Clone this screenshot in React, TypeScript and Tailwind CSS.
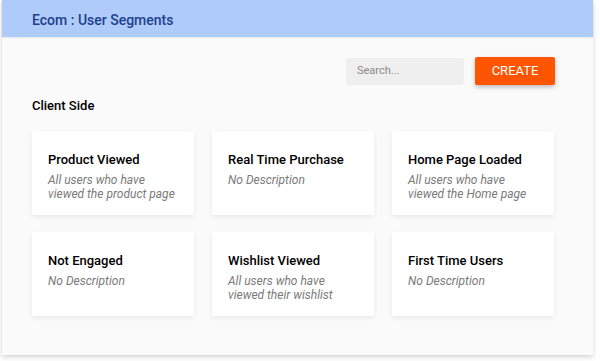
const segments = [
  { title: "Product Viewed", desc: "All users who have viewed the product page" },
  { title: "Real Time Purchase", desc: "No Description" },
  { title: "Home Page Loaded", desc: "All users who have viewed the Home page" },
  { title: "Not Engaged", desc: "No Description" },
  { title: "Wishlist Viewed", desc: "All users who have viewed their wishlist" },
  { title: "First Time Users", desc: "No Description" },
];

export default function App() {
  return (
    <div className="w-[600px] h-[361px] bg-white font-['Roboto',sans-serif]">
      <div className="ml-[2px] w-[591px] h-[355px] bg-[#fafafa] shadow-[0_2px_5px_rgba(0,0,0,0.18)] flex flex-col">
        {/* Header */}
        <div className="h-[37px] bg-[#aecbfa] px-[30px] pt-[3px] flex items-center shadow-[0_1px_2px_rgba(0,0,0,0.08)]">
          <h1 className="text-[14px] font-medium text-[#1d3f8c]">Ecom : User Segments</h1>
        </div>

        {/* Toolbar */}
        <div className="mt-[20px] flex justify-end items-center gap-[11px] pr-[38px]">
          <div className="w-[118px] h-[27px] bg-[#efefef] rounded-[2px] flex items-center px-[11px] text-[11px] text-[#8a8a8a]">
            Search...
          </div>
          <button className="w-[80px] h-[28px] bg-[#ff5500] text-white text-[13px] rounded-[2px] shadow-[0_2px_4px_rgba(0,0,0,0.25)]">
            CREATE
          </button>
        </div>

        {/* Section */}
        <div className="px-[30px] mt-[13px]">
          <div className="text-[13px] font-medium text-black leading-[16px]">Client Side</div>
          <div className="mt-[17px] grid grid-cols-[162px_162px_162px] gap-x-[18px] gap-y-[17px]">
            {segments.map((s) => (
              <div
                key={s.title}
                className="h-[84px] bg-white shadow-[0_2px_5px_rgba(0,0,0,0.07)] pt-[21px] px-[16px]"
              >
                <div className="text-[13px] font-medium text-black leading-[16px]">{s.title}</div>
                <div className="mt-[5px] text-[12px] italic text-[#7a7a7a] leading-[14px]">{s.desc}</div>
              </div>
            ))}
          </div>
        </div>
      </div>
    </div>
  );
}
